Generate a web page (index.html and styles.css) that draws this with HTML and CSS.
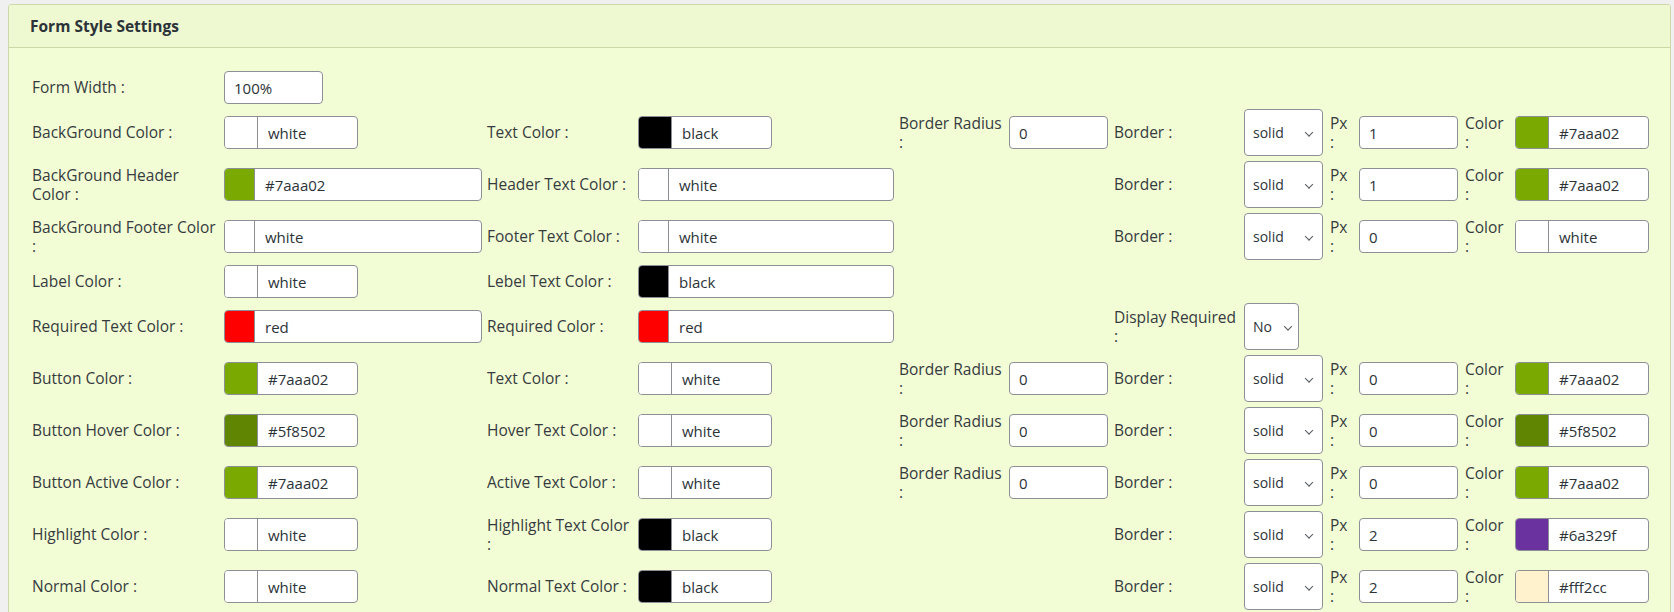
FILE: index.html
```html
<!DOCTYPE html>
<html lang="en">
<head>
    <meta charset="UTF-8">
    <title>Form Style Settings</title>
    <link rel="stylesheet" href="styles.css">
</head>
<body>
    <div class="panel">
        <h2 class="panel-title">Form Style Settings</h2>
        <div class="panel-body">
            <div class="settings-grid">
                <!-- form width -->
                <div class="lbl lbl-a new-row">Form Width :</div>
                <div><input type="text" class="txt num" value="100%"></div>

                <!-- background -->
                <div class="lbl lbl-a new-row">BackGround Color :</div>
                <div class="color-field"><span class="swatch" style="background:#ffffff"></span><input type="text" value="white"></div>
                <div class="lbl lbl-c">Text Color :</div>
                <div class="color-field"><span class="swatch" style="background:#000000"></span><input type="text" value="black"></div>
                <div class="lbl lbl-br">Border Radius :</div>
                <div><input type="text" class="txt num" value="0"></div>
                <div class="lbl lbl-g">Border :</div>
                <div class="select"><select><option>solid</option></select></div>
                <div class="lbl lbl-px">Px :</div>
                <div><input type="text" class="txt num" value="1"></div>
                <div class="lbl">Color :</div>
                <div class="color-field"><span class="swatch" style="background:#7aaa02"></span><input type="text" value="#7aaa02"></div>

                <!-- header -->
                <div class="lbl lbl-a new-row">BackGround Header Color :</div>
                <div class="color-field wide"><span class="swatch" style="background:#7aaa02"></span><input type="text" value="#7aaa02"></div>
                <div class="lbl lbl-c">Header Text Color :</div>
                <div class="color-field wide"><span class="swatch" style="background:#ffffff"></span><input type="text" value="white"></div>
                <div></div>
                <div></div>
                <div class="lbl lbl-g">Border :</div>
                <div class="select"><select><option>solid</option></select></div>
                <div class="lbl lbl-px">Px :</div>
                <div><input type="text" class="txt num" value="1"></div>
                <div class="lbl">Color :</div>
                <div class="color-field"><span class="swatch" style="background:#7aaa02"></span><input type="text" value="#7aaa02"></div>

                <!-- footer -->
                <div class="lbl lbl-a new-row">BackGround Footer Color :</div>
                <div class="color-field wide"><span class="swatch" style="background:#ffffff"></span><input type="text" value="white"></div>
                <div class="lbl lbl-c">Footer Text Color :</div>
                <div class="color-field wide"><span class="swatch" style="background:#ffffff"></span><input type="text" value="white"></div>
                <div></div>
                <div></div>
                <div class="lbl lbl-g">Border :</div>
                <div class="select"><select><option>solid</option></select></div>
                <div class="lbl lbl-px">Px :</div>
                <div><input type="text" class="txt num" value="0"></div>
                <div class="lbl">Color :</div>
                <div class="color-field"><span class="swatch" style="background:#ffffff"></span><input type="text" value="white"></div>

                <!-- label -->
                <div class="lbl lbl-a new-row">Label Color :</div>
                <div class="color-field"><span class="swatch" style="background:#ffffff"></span><input type="text" value="white"></div>
                <div class="lbl lbl-c">Lebel Text Color :</div>
                <div class="color-field wide"><span class="swatch" style="background:#000000"></span><input type="text" value="black"></div>

                <!-- required -->
                <div class="lbl lbl-a new-row">Required Text Color :</div>
                <div class="color-field wide"><span class="swatch" style="background:#ff0000"></span><input type="text" value="red"></div>
                <div class="lbl lbl-c">Required Color :</div>
                <div class="color-field wide"><span class="swatch" style="background:#ff0000"></span><input type="text" value="red"></div>
                <div></div>
                <div></div>
                <div class="lbl lbl-g">Display Required :</div>
                <div class="select small"><select><option>No</option><option>Yes</option></select></div>

                <!-- button -->
                <div class="lbl lbl-a new-row">Button Color :</div>
                <div class="color-field"><span class="swatch" style="background:#7aaa02"></span><input type="text" value="#7aaa02"></div>
                <div class="lbl lbl-c">Text Color :</div>
                <div class="color-field"><span class="swatch" style="background:#ffffff"></span><input type="text" value="white"></div>
                <div class="lbl lbl-br">Border Radius :</div>
                <div><input type="text" class="txt num" value="0"></div>
                <div class="lbl lbl-g">Border :</div>
                <div class="select"><select><option>solid</option></select></div>
                <div class="lbl lbl-px">Px :</div>
                <div><input type="text" class="txt num" value="0"></div>
                <div class="lbl">Color :</div>
                <div class="color-field"><span class="swatch" style="background:#7aaa02"></span><input type="text" value="#7aaa02"></div>

                <!-- button hover -->
                <div class="lbl lbl-a new-row">Button Hover Color :</div>
                <div class="color-field"><span class="swatch" style="background:#5f8502"></span><input type="text" value="#5f8502"></div>
                <div class="lbl lbl-c">Hover Text Color :</div>
                <div class="color-field"><span class="swatch" style="background:#ffffff"></span><input type="text" value="white"></div>
                <div class="lbl lbl-br">Border Radius :</div>
                <div><input type="text" class="txt num" value="0"></div>
                <div class="lbl lbl-g">Border :</div>
                <div class="select"><select><option>solid</option></select></div>
                <div class="lbl lbl-px">Px :</div>
                <div><input type="text" class="txt num" value="0"></div>
                <div class="lbl">Color :</div>
                <div class="color-field"><span class="swatch" style="background:#5f8502"></span><input type="text" value="#5f8502"></div>

                <!-- button active -->
                <div class="lbl lbl-a new-row">Button Active Color :</div>
                <div class="color-field"><span class="swatch" style="background:#7aaa02"></span><input type="text" value="#7aaa02"></div>
                <div class="lbl lbl-c">Active Text Color :</div>
                <div class="color-field"><span class="swatch" style="background:#ffffff"></span><input type="text" value="white"></div>
                <div class="lbl lbl-br">Border Radius :</div>
                <div><input type="text" class="txt num" value="0"></div>
                <div class="lbl lbl-g">Border :</div>
                <div class="select"><select><option>solid</option></select></div>
                <div class="lbl lbl-px">Px :</div>
                <div><input type="text" class="txt num" value="0"></div>
                <div class="lbl">Color :</div>
                <div class="color-field"><span class="swatch" style="background:#7aaa02"></span><input type="text" value="#7aaa02"></div>

                <!-- highlight -->
                <div class="lbl lbl-a new-row">Highlight Color :</div>
                <div class="color-field"><span class="swatch" style="background:#ffffff"></span><input type="text" value="white"></div>
                <div class="lbl lbl-c">Highlight Text Color :</div>
                <div class="color-field"><span class="swatch" style="background:#000000"></span><input type="text" value="black"></div>
                <div></div>
                <div></div>
                <div class="lbl lbl-g">Border :</div>
                <div class="select"><select><option>solid</option></select></div>
                <div class="lbl lbl-px">Px :</div>
                <div><input type="text" class="txt num" value="2"></div>
                <div class="lbl">Color :</div>
                <div class="color-field"><span class="swatch" style="background:#6a329f"></span><input type="text" value="#6a329f"></div>

                <!-- normal -->
                <div class="lbl lbl-a new-row">Normal Color :</div>
                <div class="color-field"><span class="swatch" style="background:#ffffff"></span><input type="text" value="white"></div>
                <div class="lbl lbl-c">Normal Text Color :</div>
                <div class="color-field"><span class="swatch" style="background:#000000"></span><input type="text" value="black"></div>
                <div></div>
                <div></div>
                <div class="lbl lbl-g">Border :</div>
                <div class="select"><select><option>solid</option></select></div>
                <div class="lbl lbl-px">Px :</div>
                <div><input type="text" class="txt num" value="2"></div>
                <div class="lbl">Color :</div>
                <div class="color-field"><span class="swatch" style="background:#fff2cc"></span><input type="text" value="#fff2cc"></div>
            </div>
        </div>
    </div>
</body>
</html>
```

FILE: styles.css
```css
body {
    margin: 0;
    padding: 4px 3px 0 8px;
    background: #f0f0f1;
    font-family: 'Open Sans', 'Noto Sans', sans-serif;
    font-size: 15.5px;
    color: #363b40;
    height: 608px;
    overflow: hidden;
}
.panel {
    background: #f3fdd5;
    border: 1px solid #cdd9ab;
    border-radius: 3px;
    height: 640px;
    overflow: hidden;
}
.panel-title {
    margin: 0;
    height: 42px;
    line-height: 42px;
    padding: 0 21px;
    font-size: 15.5px;
    font-weight: bold;
    color: #2c3338;
    background: #eef8d1;
    border-bottom: 1px solid #cbd8a6;
}
.panel-body {
    padding: 23px 23px 0;
}
.settings-grid {
    display: grid;
    grid-template-columns: 192px 263px 151px 261px 110px 105px 130px 84px 31px 106px 50px 140px;
    row-gap: 5px;
    align-items: center;
}
.new-row {
    grid-column-start: 1;
}
.lbl {
    padding-right: 8px;
    line-height: 19px;
}
.lbl-a {
    padding-right: 7px;
}
.lbl-c {
    padding-right: 4px;
}
.lbl-br {
    padding-right: 3px;
}
.lbl-g {
    padding-right: 5px;
}
.lbl-px {
    padding-left: 2px;
}
input {
    font-family: inherit;
    font-size: 15px;
    color: #2c3338;
}
.txt {
    box-sizing: border-box;
    height: 33px;
    border: 1px solid #8c8f94;
    border-radius: 4px;
    background: #fff;
    padding: 0 9px;
    outline: none;
}
.num {
    width: 99px;
}
.color-field {
    box-sizing: border-box;
    display: flex;
    width: 134px;
    height: 33px;
    border: 1px solid #8c8f94;
    border-radius: 4px;
    background: #fff;
    overflow: hidden;
}
.color-field.wide {
    width: calc(100% - 5px);
}
.color-field .swatch {
    width: 32px;
    flex-shrink: 0;
    border-right: 1px solid #8c8f94;
}
.color-field.wide .swatch {
    width: 29px;
}
.color-field input {
    flex: 1;
    min-width: 0;
    border: none;
    background: transparent;
    padding: 0 0 0 10px;
    outline: none;
}
.select {
    position: relative;
    width: 79px;
    height: 47px;
}
.select.small {
    width: 55px;
}
.select select {
    appearance: none;
    -webkit-appearance: none;
    width: 100%;
    height: 100%;
    border: 1px solid #8c8f94;
    border-radius: 4px;
    background: #fff;
    padding: 0 20px 0 8px;
    font-family: inherit;
    font-size: 14px;
    color: #2c3338;
}
.select::after {
    content: "";
    position: absolute;
    right: 11px;
    top: 50%;
    width: 5px;
    height: 5px;
    border-right: 1.5px solid #50575e;
    border-bottom: 1.5px solid #50575e;
    transform: translateY(-60%) rotate(45deg);
    pointer-events: none;
}
.select.small::after {
    right: 8px;
}
```
